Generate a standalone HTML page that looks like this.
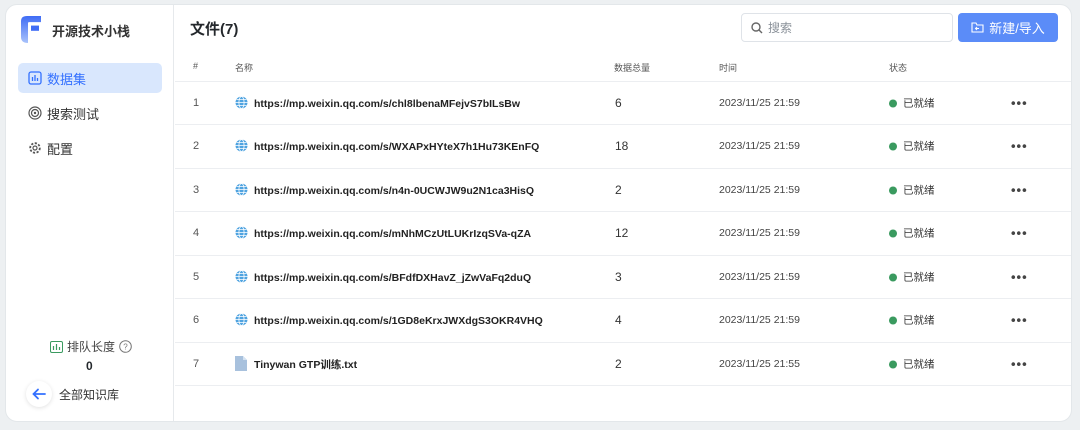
<!DOCTYPE html>
<html><head><meta charset="utf-8"><style>
*{box-sizing:border-box;margin:0;padding:0}
body{width:1080px;height:430px;background:#edf0f2;font-family:"Liberation Sans","Noto Sans CJK SC",sans-serif;position:relative;overflow:hidden;color:#24282c}
.card{position:absolute;left:5px;top:4px;width:1067px;height:418px;background:#fff;border-radius:12px;border:1px solid #e3e7ea}
.side{position:absolute;left:0;top:0;width:168px;height:100%;border-right:1px solid #e6e9ec}
.logo{position:absolute;left:15px;top:11px;width:20px;height:27px}
.brand{position:absolute;left:46px;top:16px;font-size:13px;font-weight:bold;color:#333}
.nav{position:absolute;left:12px;width:144px;height:30px;border-radius:5px;font-size:13px;display:flex;align-items:center;padding-left:10px;color:#333}
.nav svg{margin-right:5px}
.act{background:#d9e7fd;color:#3370ff}
.q{position:absolute;left:44px;top:333px;font-size:12px;color:#444;display:flex;align-items:center;gap:4px}
.zero{position:absolute;left:80px;top:354px;font-size:12px;font-weight:bold}
.back{position:absolute;left:20px;top:376px;width:26px;height:26px;border-radius:50%;background:#fff;box-shadow:0 1px 4px rgba(0,0,0,.12);display:flex;align-items:center;justify-content:center}
.backt{position:absolute;left:53px;top:381px;font-size:12px;color:#333}
.title{position:absolute;left:184px;top:13px;font-size:15px;font-weight:bold}
.search{position:absolute;left:735px;top:8px;width:212px;height:29px;border:1px solid #dfe3e8;border-radius:4px;font-size:12px;color:#8a9199;display:flex;align-items:center;padding-left:9px;gap:5px}
.btn{position:absolute;left:952px;top:8px;width:100px;height:29px;border-radius:4px;background:#5b8cf8;color:#fff;font-size:13px;display:flex;align-items:center;justify-content:center;gap:5px}
.th{position:absolute;top:56px;font-size:9px;color:#555}
.hl{position:absolute;left:169px;right:0;height:1px;background:#eceef1}
.row{position:absolute;left:169px;right:0;height:43px;font-size:12px}
.row span{position:absolute;top:50%;transform:translateY(-50%);white-space:nowrap}
.url{font-weight:bold;font-size:10.5px;color:#222}
.c1{left:18px;color:#555;font-size:11px}.c2{left:60px}.c3{left:440px;color:#333}.c4{left:544px;color:#444;font-size:10.5px}.c5{left:714px;color:#333;font-size:10.5px}
.dot{display:inline-block;width:8px;height:8px;border-radius:50%;background:#3a9a5f;margin-right:6px;vertical-align:-1px}
.more{left:836px;font-size:13px;font-weight:bold;letter-spacing:1px;color:#444}
</style></head><body>
<div class="card">
<div class="side">
<svg class="logo" viewBox="0 0 20 31" preserveAspectRatio="none"><defs><linearGradient id="g" x1="0" y1="0" x2="0" y2="1"><stop offset="0" stop-color="#3f6cf5"/><stop offset="1" stop-color="#a9c3fb"/></linearGradient></defs><path d="M0 6 Q0 0 6 0 L20 0 L20 7 L8 7 Q7 7 7 8 L7 31 Q0 31 0 24Z" fill="url(#g)"/><path d="M10 11 L18 11 L18 17 L10 17Z" fill="#3f6cf5"/></svg>
<div class="brand">开源技术小栈</div>
<div class="nav act" style="top:58px"><svg width="14" height="14" viewBox="0 0 14 14"><rect x="1" y="1" width="12" height="12" rx="2" fill="none" stroke="#3370ff" stroke-width="1.3"/><path d="M4.5 10V6M7 10V4M9.5 10V7" stroke="#3370ff" stroke-width="1.3"/></svg>数据集</div>
<div class="nav" style="top:93px"><svg width="14" height="14" viewBox="0 0 14 14"><circle cx="7" cy="7" r="6" fill="none" stroke="#555" stroke-width="1.2"/><circle cx="7" cy="7" r="3.5" fill="none" stroke="#555" stroke-width="1.2"/><circle cx="7" cy="7" r="1.2" fill="#555"/></svg>搜索测试</div>
<div class="nav" style="top:128px"><svg width="14" height="14" viewBox="0 0 14 14"><circle cx="7" cy="7" r="4.8" fill="none" stroke="#555" stroke-width="1.8" stroke-dasharray="2.2 1.5"/><circle cx="7" cy="7" r="2" fill="none" stroke="#555" stroke-width="1.2"/></svg>配置</div>
<div class="q"><svg width="13" height="12" viewBox="0 0 13 12"><rect x=".5" y=".5" width="12" height="11" rx="1.5" fill="none" stroke="#3a9a5f"/><path d="M3.5 9V5M6.5 9V3M9.5 9V6" stroke="#3a9a5f" stroke-width="1.2"/></svg>排队长度<svg width="13" height="13" viewBox="0 0 13 13"><circle cx="6.5" cy="6.5" r="5.8" fill="none" stroke="#777"/><text x="6.5" y="9.5" font-size="8" text-anchor="middle" fill="#777" font-family="Liberation Sans">?</text></svg></div>
<div class="zero">0</div>
<div class="back"><svg width="14" height="12" viewBox="0 0 14 12"><path d="M13 6H2M6 1.5 1.5 6 6 10.5" fill="none" stroke="#3370ff" stroke-width="1.8" stroke-linecap="round"/></svg></div>
<div class="backt">全部知识库</div>
</div>
<div class="title">文件(7)</div>
<div class="search"><svg width="12" height="12" viewBox="0 0 12 12"><circle cx="5" cy="5" r="4" fill="none" stroke="#666" stroke-width="1.4"/><path d="M8 8 11 11" stroke="#666" stroke-width="1.4"/></svg>搜索</div>
<div class="btn"><svg width="13" height="11" viewBox="0 0 13 11"><path d="M1 2V10H12V3H6L5 1H1Z" fill="none" stroke="#fff" stroke-width="1.1"/><path d="M8 6.5H4.5M6 5 4.5 6.5 6 8" stroke="#fff" fill="none"/></svg>新建/导入</div>
<div class="th" style="left:187px">#</div><div class="th" style="left:229px">名称</div><div class="th" style="left:608px">数据总量</div><div class="th" style="left:713px">时间</div><div class="th" style="left:883px">状态</div>
<div class="hl" style="top:76px"></div>
<div id="rows"></div>
</div>
<script>
var d=[["1","https://mp.weixin.qq.com/s/chl8lbenaMFejvS7bILsBw","6","21:59"],["2","https://mp.weixin.qq.com/s/WXAPxHYteX7h1Hu73KEnFQ","18","21:59"],["3","https://mp.weixin.qq.com/s/n4n-0UCWJW9u2N1ca3HisQ","2","21:59"],["4","https://mp.weixin.qq.com/s/mNhMCzUtLUKrIzqSVa-qZA","12","21:59"],["5","https://mp.weixin.qq.com/s/BFdfDXHavZ_jZwVaFq2duQ","3","21:59"],["6","https://mp.weixin.qq.com/s/1GD8eKrxJWXdgS3OKR4VHQ","4","21:59"],["7","Tinywan GTP训练.txt","2","21:55"]];
var g='<svg width="13" height="13" viewBox="0 0 13 13" style="vertical-align:-2px;margin-right:6px"><circle cx="6.5" cy="6.5" r="6" fill="#4fa3e0"/><g fill="none" stroke="#fff" stroke-width=".8"><ellipse cx="6.5" cy="6.5" rx="2.6" ry="6"/><path d="M.5 6.5H12.5M1.5 3.5H11.5M1.5 9.5H11.5"/></g></svg>';
var f='<svg width="12" height="15" viewBox="0 0 12 15" style="vertical-align:-3px;margin-right:7px"><path d="M0 0H8L12 4V15H0Z" fill="#a8c1dd"/><path d="M8 0V4H12" fill="#d4e2f1"/></svg>';
var h='';d.forEach(function(r,i){var t=76+i*43.5;h+='<div class="row" style="top:'+t+'px"><span class="c1">'+r[0]+'</span><span class="c2 url">'+(i<6?g:f)+r[1]+'</span><span class="c3">'+r[2]+'</span><span class="c4">2023/11/25 '+r[3]+'</span><span class="c5"><i class="dot"></i>已就绪</span><span class="more">•••</span></div><div class="hl" style="top:'+(t+43)+'px"></div>';});
document.getElementById('rows').outerHTML=h;
</script>
</body></html>
